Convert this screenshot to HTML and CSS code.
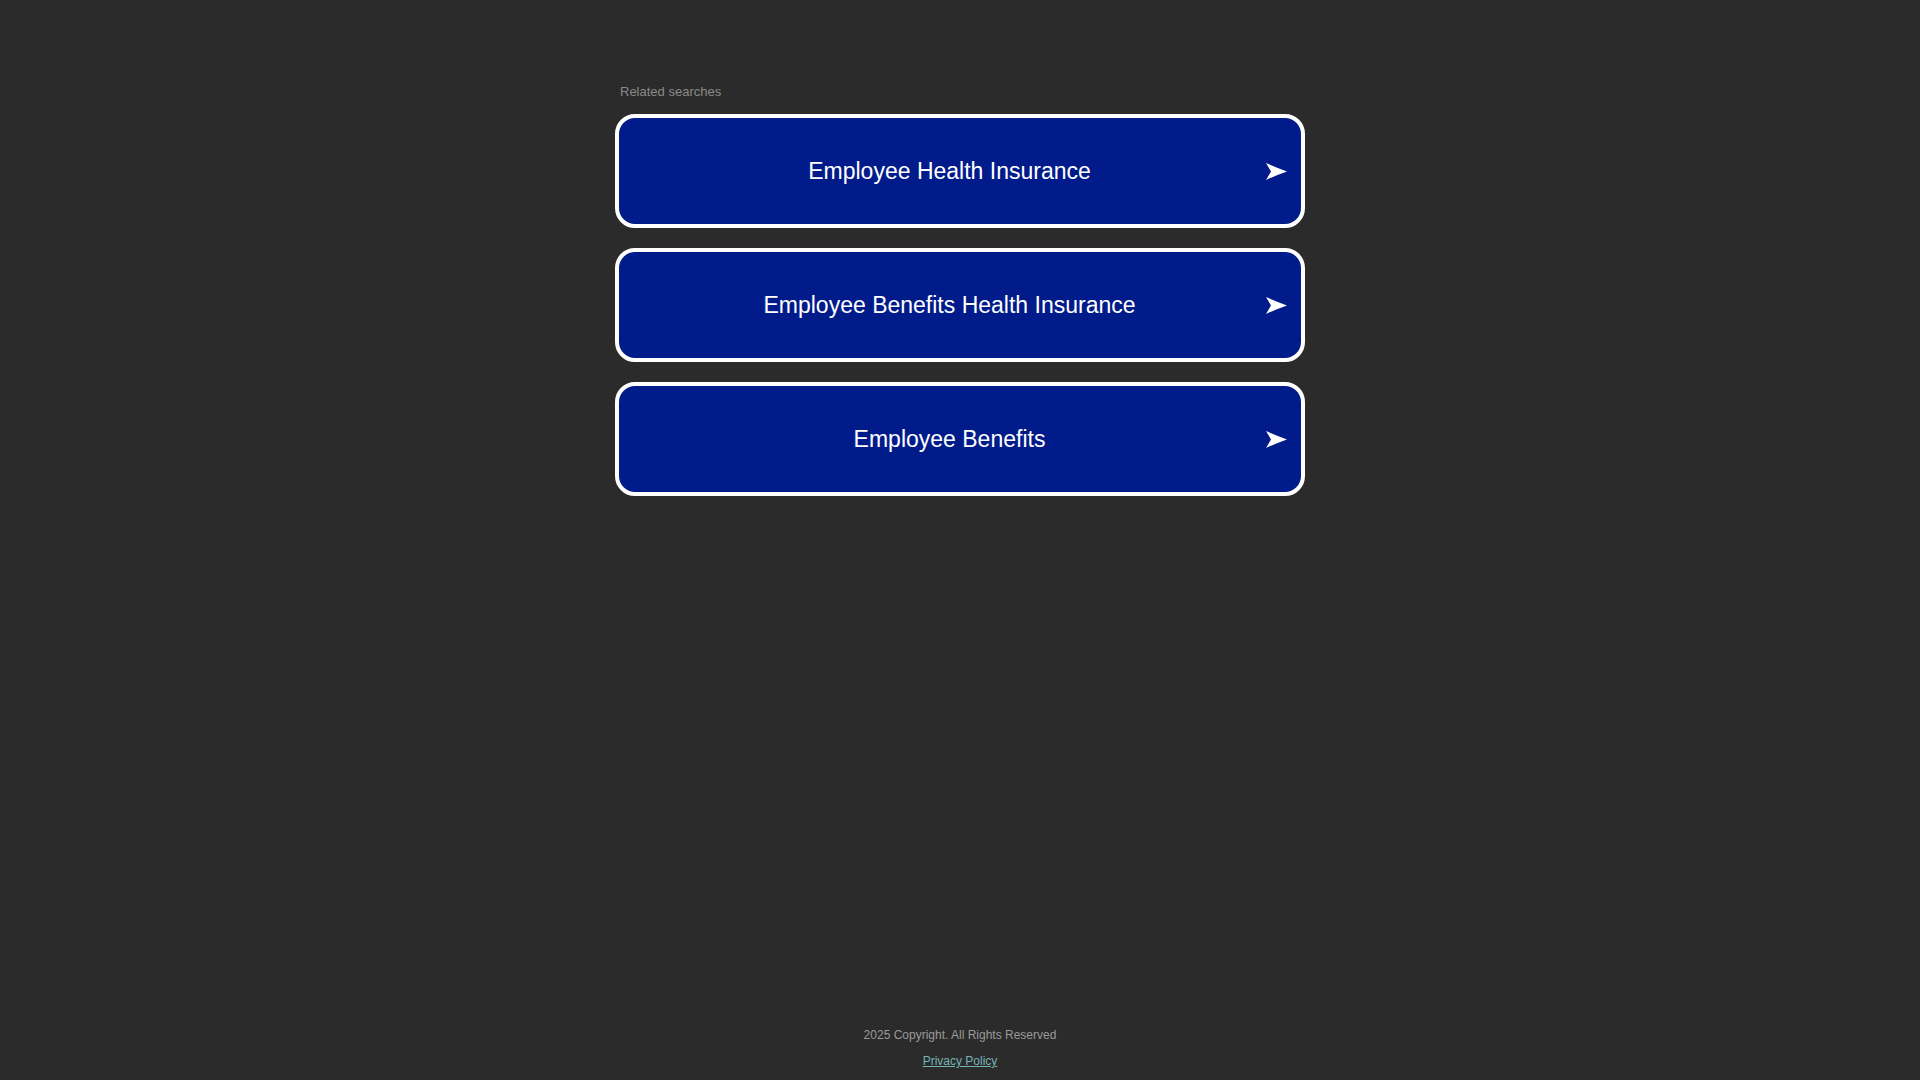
FILE: index.html
```html
<!DOCTYPE html>
<html lang="en">
<head>
<meta charset="utf-8">
<title>Related searches</title>
<link rel="stylesheet" href="styles.css">
</head>
<body>
<div class="page">
  <main class="main">
    <div class="related">Related searches</div>
    <ul class="list">
      <li><a class="item" href="#"><span class="label">Employee Health Insurance</span><svg class="arrow" viewBox="0 0 21 17" width="21" height="17"><path d="M0 0 Q11 5 21 8.5 Q11 12 0 17 L5 8.5 Z" fill="#fff"/></svg></a></li>
      <li><a class="item" href="#"><span class="label">Employee Benefits Health Insurance</span><svg class="arrow" viewBox="0 0 21 17" width="21" height="17"><path d="M0 0 Q11 5 21 8.5 Q11 12 0 17 L5 8.5 Z" fill="#fff"/></svg></a></li>
      <li><a class="item" href="#"><span class="label">Employee Benefits</span><svg class="arrow" viewBox="0 0 21 17" width="21" height="17"><path d="M0 0 Q11 5 21 8.5 Q11 12 0 17 L5 8.5 Z" fill="#fff"/></svg></a></li>
    </ul>
  </main>
  <footer class="footer">
    <div class="copy">2025 Copyright. All Rights Reserved</div>
    <a class="privacy" href="#">Privacy Policy</a>
  </footer>
</div>
</body>
</html>
```
FILE: styles.css
```css
html, body {
  margin: 0;
  padding: 0;
}
body {
  background: #2b2b2b;
  font-family: "Liberation Sans", Arial, sans-serif;
}
.page {
  min-height: 100vh;
  display: flex;
  flex-direction: column;
}
.main {
  width: 690px;
  margin: 0 auto;
  padding-top: 84px;
}
.related {
  font-size: 13px;
  line-height: 15px;
  color: #8a8a8a;
  padding-left: 5px;
  margin-bottom: 15px;
}
.list {
  list-style: none;
  margin: 0;
  padding: 0;
  display: flex;
  flex-direction: column;
  gap: 20px;
}
.item {
  box-sizing: border-box;
  height: 114px;
  display: flex;
  align-items: center;
  background: #011b8b;
  border: 4px solid #ffffff;
  border-radius: 20px;
  padding: 0 14px 0 14px;
  color: #ffffff;
  text-decoration: none;
}
.label {
  flex: 1;
  text-align: center;
  font-size: 23px;
  line-height: 28px;
}
.arrow {
  display: block;
  flex: none;
}
.footer {
  margin-top: auto;
  display: flex;
  flex-direction: column;
  align-items: center;
  padding-bottom: 12px;
  font-size: 12px;
  line-height: 14px;
}
.copy {
  color: #9a9a9a;
  margin-bottom: 12px;
}
.privacy {
  color: #74b3b6;
  text-decoration: underline;
}
```
